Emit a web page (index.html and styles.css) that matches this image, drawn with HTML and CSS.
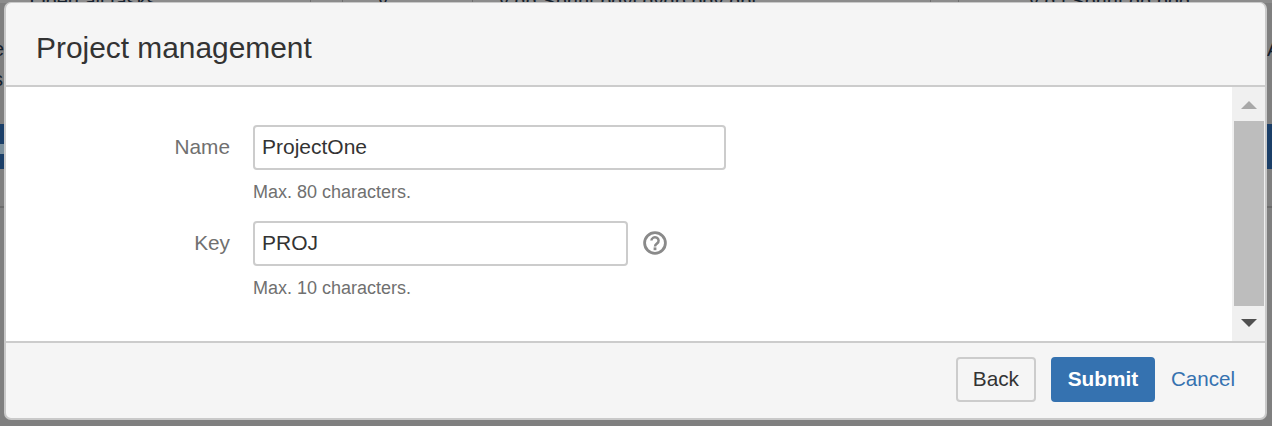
FILE: index.html
```html
<!DOCTYPE html>
<html lang="en">
<head>
<meta charset="utf-8">
<title>Project management</title>
<link rel="stylesheet" href="styles.css">
</head>
<body>
<div class="page">
  <div class="page-top">
    <div class="cell cell-a">Open all tasks</div>
    <div class="cell cell-b"></div>
    <div class="cell cell-c">y</div>
    <div class="cell cell-d">y gg Sprint pgyj gyqp pgy gpj</div>
    <div class="cell cell-e"></div>
    <div class="cell cell-f">y g j Sprint gg pqg</div>
  </div>
  <div class="edge-text edge-e">e</div>
  <div class="edge-text edge-s">s</div>
  <div class="edge-text edge-a">A</div>
  <div class="band"><div class="band-chip"></div></div>
  <div class="rule"></div>
</div>
<section class="dialog">
  <header class="dialog-header"><h2>Project management</h2></header>
  <div class="dialog-body">
    <form class="form">
      <div class="field">
        <label class="field-label" for="name">Name</label>
        <div class="field-main">
          <input class="text-input input-long" id="name" type="text" value="ProjectOne">
          <div class="hint">Max. 80 characters.</div>
        </div>
      </div>
      <div class="field">
        <label class="field-label" for="key">Key</label>
        <div class="field-main">
          <div class="input-row">
            <input class="text-input input-short" id="key" type="text" value="PROJ">
            <svg class="help" viewBox="0 0 24 24" width="24" height="24" aria-hidden="true">
              <circle cx="12" cy="12" r="10.4" fill="none" stroke="#8a8a8a" stroke-width="2.8"/>
              <path d="M8.4 9.6a3.6 3.4 0 1 1 5.7 2.8c-1.3.9-2.1 1.5-2.1 3" fill="none" stroke="#8a8a8a" stroke-width="2.5"/>
              <rect x="10.6" y="16.4" width="2.8" height="2.8" fill="#8a8a8a"/>
            </svg>
          </div>
          <div class="hint">Max. 10 characters.</div>
        </div>
      </div>
    </form>
    <div class="scrollbar">
      <div class="arrow arrow-up"></div>
      <div class="thumb"></div>
      <div class="arrow arrow-down"></div>
    </div>
  </div>
  <footer class="dialog-footer">
    <button class="btn" type="button">Back</button>
    <button class="btn btn-primary" type="button">Submit</button>
    <a class="cancel" href="#">Cancel</a>
  </footer>
</section>
</body>
</html>
```
FILE: styles.css
```css
* { box-sizing: border-box; }
html, body { margin: 0; padding: 0; height: 100%; }
body {
  overflow: hidden;
  background: #7f7f7f;
  font-family: "Liberation Sans", Arial, sans-serif;
  color: #333;
}
.page { position: absolute; inset: 0; overflow: hidden; }
.page-top {
  display: flex;
  height: 3px;
  overflow: hidden;
  background: #8c8c8c;
}
.cell {
  flex: none;
  height: 3px;
  border-right: 1px solid #6f6f6f;
  font-size: 20px;
  line-height: 3px;
  color: #14202c;
  white-space: nowrap;
  overflow: hidden;
  padding-top: 0;
}
.cell-a { width: 311px; padding-left: 30px; }
.cell-b { width: 32px; }
.cell-c { width: 130px; padding-left: 35px; }
.cell-d { width: 458px; padding-left: 26px; }
.cell-e { width: 28px; }
.cell-f { width: 313px; padding-left: 70px; border-right: none; }
.edge-text { position: absolute; font-size: 20px; line-height: 24px; color: #14202c; }
.edge-e { left: -7px; top: 37px; }
.edge-s { left: -7px; top: 67px; }
.edge-a { left: 1267px; top: 37px; }
.band { position: absolute; left: 0; right: 0; top: 124px; height: 45px; padding-top: 20px; background: #1b3f68; }
.band-chip { width: 4px; height: 10px; background: #7a8f9c; }
.rule { position: absolute; left: 0; right: 0; top: 206px; height: 2px; background: #6b6b6b; }

.dialog {
  position: absolute; left: 4px; top: 2px;
  width: 1263px; height: 418px;
  display: flex; flex-direction: column;
  background: #f5f5f5;
  border: 2px solid #c9c9c9;
  border-top-width: 1px;
  border-radius: 7px;
}
.dialog-header {
  height: 84px;
  flex: none;
  padding: 8px 0 0 30px;
  display: flex; align-items: center;
  border-bottom: 2px solid #cccccc;
}
.dialog-header h2 { margin: 0; font-size: 29.9px; font-weight: 400; color: #333; }
.dialog-body { flex: 1; min-height: 0; display: flex; background: #fff; }
.form { flex: 1; padding-top: 38px; }
.field { display: flex; height: 96px; }
.field-label {
  width: 224px; flex: none;
  padding-top: 10px;
  text-align: right;
  font-size: 20.8px; line-height: 24px;
  color: #707070;
}
.field-main { margin-left: 23px; }
.input-row { display: flex; align-items: center; gap: 15px; }
.text-input {
  display: block;
  height: 45px;
  padding: 0 7px 2px;
  border: 2px solid #cccccc;
  border-radius: 4px;
  background: #fff;
  font: 21px "Liberation Sans", Arial, sans-serif;
  color: #333;
  outline: none;
}
.input-long { width: 473px; }
.input-short { width: 375px; }
.help { flex: none; margin-bottom: 2px; }
.hint { margin-top: 12px; font-size: 18px; line-height: 20px; color: #707070; }

.scrollbar {
  width: 33px; flex: none;
  display: flex; flex-direction: column; align-items: center;
  background: #f0f0f0;
}
.arrow { width: 0; height: 0; flex: none; border-left: 8px solid transparent; border-right: 8px solid transparent; }
.arrow-up { margin-top: 14px; margin-bottom: 12px; border-bottom: 8px solid #a8a8a8; }
.arrow-down { margin-top: 13px; border-top: 8px solid #505050; }
.thumb { width: 30px; height: 185px; flex: none; background: #bdbdbd; }

.dialog-footer {
  height: 77px; flex: none;
  display: flex; align-items: center; justify-content: flex-end;
  padding: 0 30px 3px 0;
  border-top: 2px solid #cccccc;
}
.btn {
  width: 80px;
  height: 45px;
  padding: 0;
  border: 2px solid #cccccc;
  border-radius: 4px;
  background: #f5f5f5;
  font: 20.8px "Liberation Sans", Arial, sans-serif;
  color: #333;
}
.btn-primary {
  width: 104px;
  margin-left: 15px;
  border-color: #3572b0;
  background: #3572b0;
  color: #fff;
  font-weight: 700;
}
.cancel { margin-left: 16px; font-size: 20.6px; color: #3572b0; text-decoration: none; }
```
